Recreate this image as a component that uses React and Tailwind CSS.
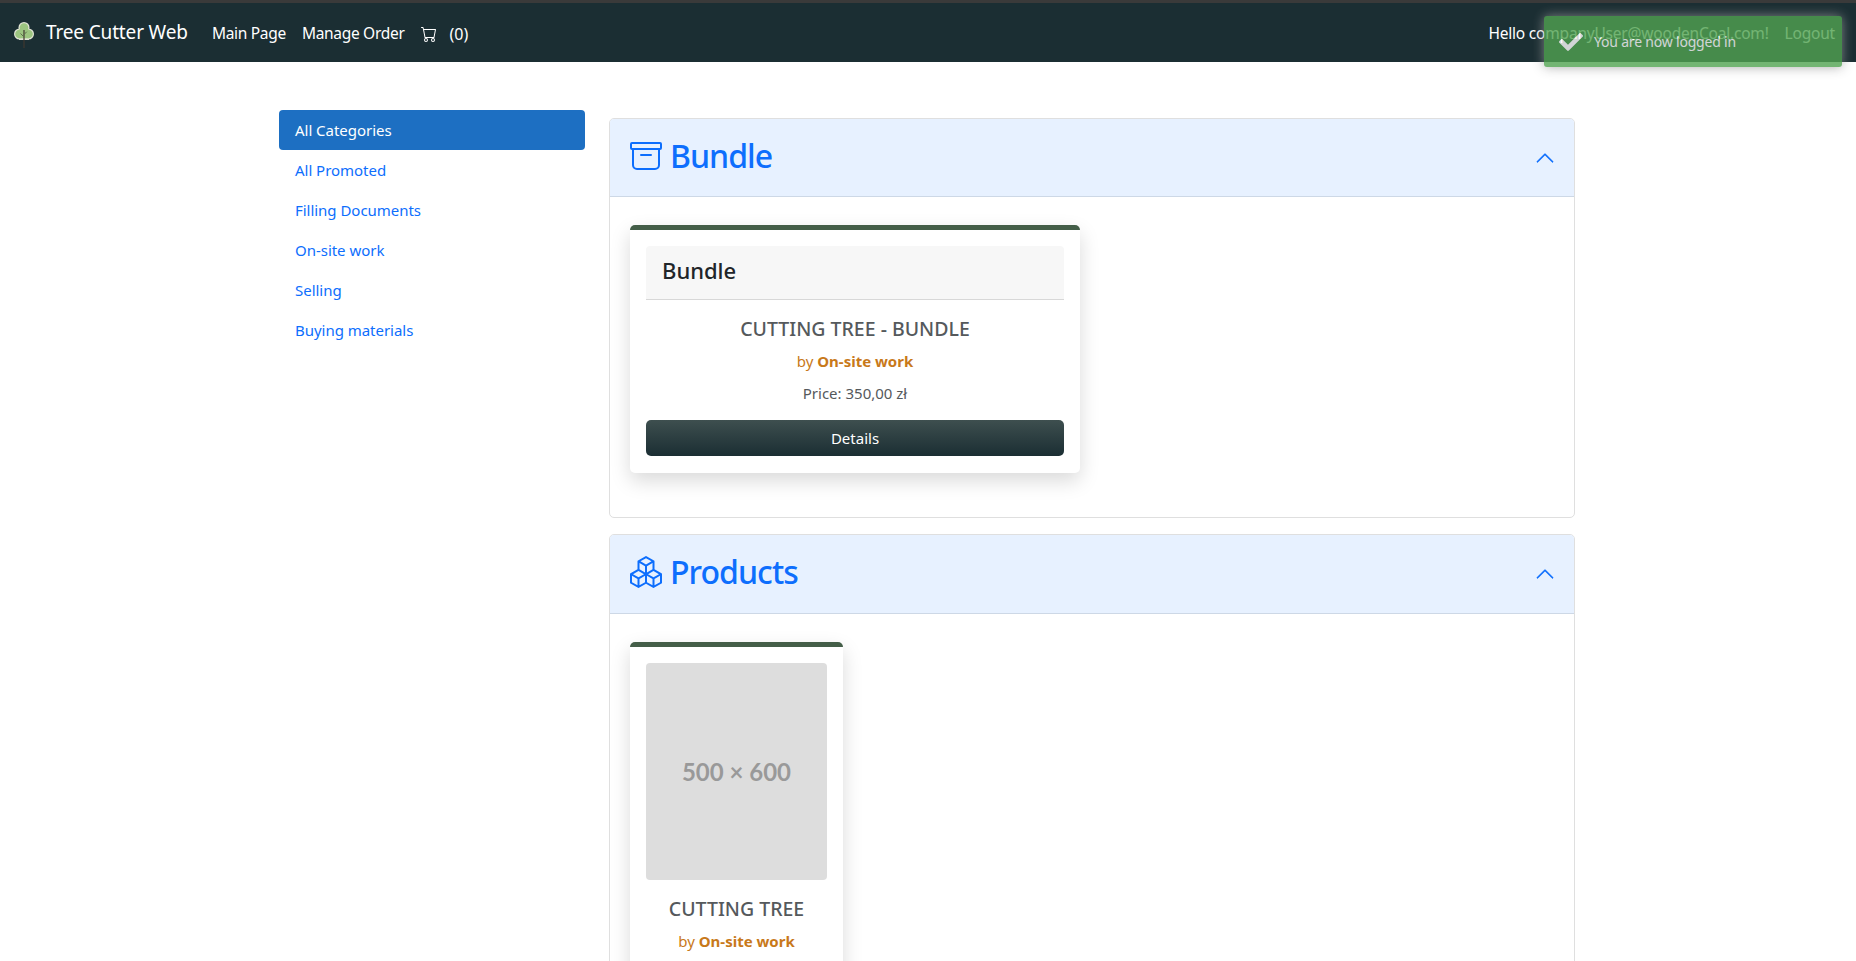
import React from "react";
import { BsArchive, BsBoxes, BsCart, BsChevronUp } from "react-icons/bs";
import { FaCheck } from "react-icons/fa";

const font = "font-['Noto_Sans','Open_Sans',sans-serif]";

function Tree() {
  return (
    <svg width="22" height="27" viewBox="0 0 22 27" className="mt-[3px] shrink-0">
      <g fill="#e2e4d6">
        <circle cx="11" cy="6.500" r="5.500" />
        <circle cx="6.500" cy="13" r="5.500" />
        <circle cx="15.500" cy="13" r="5.500" />
        <rect x="6" y="9" width="10" height="10" />
      </g>
      <g fill="#9cc580">
        <circle cx="11" cy="6.500" r="4.300" />
        <circle cx="6.500" cy="13" r="4.300" />
        <circle cx="15.500" cy="13" r="4.300" />
        <rect x="6.500" y="8" width="9" height="9.300" />
      </g>
      <path d="M11 9v18" stroke="#40382f" strokeWidth="1.200" />
      <path d="M11 16l-3.500-3.500M11 13.500l2.800-2.800" stroke="#5d6f4c" strokeWidth="1" fill="none" />
    </svg>
  );
}

function SideLink({ children, active }) {
  return (
    <a className={`block h-10 rounded-[4px] px-4 text-[15px] leading-10 tracking-[-0.03px] ${active ? "bg-[#1d6fc2] text-white" : "text-[#0d6efd]"}`}>
      {children}
    </a>
  );
}

function Panel({ icon, title, head, children }) {
  return (
    <section className="rounded-[5px] border border-[#dfdfdf]">
      <header className={`flex ${head} items-center justify-between rounded-t-[4px] border-b border-[#cdd8e6] bg-[#e7f1ff] pl-5 pr-[19px] text-[#0d6efd]`}>
        <h2 className="mb-1 flex items-center gap-2 text-[32px] font-medium leading-none tracking-[-0.95px]">
          {icon}
          <span>{title}</span>
        </h2>
        <BsChevronUp className="text-[20px]" strokeWidth="0.3" />
      </header>
      {children}
    </section>
  );
}

function Info({ title }) {
  return (
    <>
      <h5 className="mt-[17px] text-center text-[19.500px] font-medium leading-6 text-[#55595c]">{title}</h5>
      <p className="mt-[8px] text-center text-[15px] leading-6 text-[#c8791a]">
        by <b className="font-bold">On-site work</b>
      </p>
      <p className="mt-[8px] text-center text-[15px] leading-6 text-[#55595c]">Price: 350,00 zł</p>
    </>
  );
}

function DetailsBtn() {
  return (
    <button className="mt-[15px] block h-9 w-full rounded-[5px] bg-gradient-to-b from-[#3e4f4f] to-[#1b2e33] text-[15px] text-white">
      Details
    </button>
  );
}

export default function App() {
  return (
    <div className={`relative h-[961px] overflow-hidden bg-white ${font}`}>
      <div className="h-[3px] bg-[#3a3a3a]" />
      <nav className="flex h-[59px] items-center justify-between bg-[#1b2e33] pl-[13px] pr-[21px] text-white">
        <div className="flex items-center">
          <Tree />
          <span className="ml-[11px] text-[19px] tracking-[-0.15px]">Tree Cutter Web</span>
          <a className="ml-[24px] mt-[2px] text-[15.500px] tracking-[-0.3px]">Main Page</a>
          <a className="ml-4 mt-[2px] text-[15.500px] tracking-[-0.3px]">Manage Order</a>
          <BsCart className="ml-4 mt-[2px] text-[16px]" />
          <span className="ml-[13px] mt-[2px] text-[16px]">(0)</span>
        </div>
        <div className="mt-[2px] flex items-center text-[15.500px] tracking-[-0.2px]">
          <span>Hello companyUser@woodenCoal.com!</span>
          <a className="ml-4 text-white">Logout</a>
        </div>
      </nav>

      <div className="ml-[267px] mt-[48px] flex w-[1320px]">
        <aside className="w-[330px] px-3">
          <SideLink active>All Categories</SideLink>
          <SideLink>All Promoted</SideLink>
          <SideLink>Filling Documents</SideLink>
          <SideLink>On-site work</SideLink>
          <SideLink>Selling</SideLink>
          <SideLink>Buying materials</SideLink>
        </aside>
        <main className="mt-2 flex w-[990px] flex-col gap-4 px-3">
          <Panel head="h-[78px]" icon={<BsArchive className="text-[32px]" />} title="Bundle">
            <div className="h-[320px] px-5 pt-7">
              <article className="h-[248px] w-[450px] rounded-[5px] border-t-[5px] border-[#445e48] bg-white p-4 shadow-[0_8px_20px_rgba(0,0,0,0.15)]">
                <div className="flex h-[54px] items-center rounded-t-[4px] border-b border-[#d8d8d8] bg-[#f7f7f7] px-4 pb-1 text-[22px] font-medium text-[#212529]">
                  Bundle
                </div>
                <Info title="CUTTING TREE - BUNDLE" />
                <DetailsBtn />
              </article>
            </div>
          </Panel>
          <Panel head="h-[79px]" icon={<BsBoxes className="text-[32px]" />} title="Products">
            <div className="px-5 pt-7 pb-10">
              <article className="w-[213px] rounded-[5px] border-t-[5px] border-[#445e48] bg-white p-4 shadow-[0_8px_20px_rgba(0,0,0,0.15)]">
                <div className="flex h-[217px] items-center justify-center rounded-[4px] bg-[#dddddd] font-['Lato',sans-serif] text-[24px] font-bold text-[#999999]">
                  500 × 600
                </div>
                <Info title="CUTTING TREE" />
                <DetailsBtn />
              </article>
            </div>
          </Panel>
        </main>
      </div>

      <div className="absolute right-[14px] top-4 flex h-[51px] w-[298px] items-center rounded-[3px] bg-[#51a351] pl-[15px] text-[14px] tracking-[-0.2px] text-white opacity-80 shadow-[0_0_12px_#999999]">
        <FaCheck className="mr-[11px] text-[24px]" />
        <span>You are now logged in</span>
      </div>
    </div>
  );
}
